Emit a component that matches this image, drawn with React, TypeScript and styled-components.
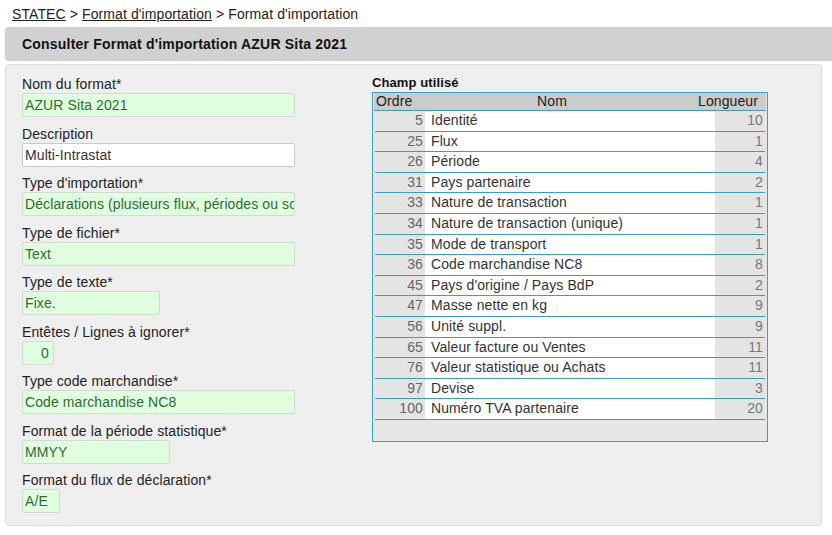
import React from "react";
import styled, { createGlobalStyle } from "styled-components";

const Global = createGlobalStyle`
  html, body { margin: 0; padding: 0; background: #ffffff; }
  body { font-family: "Liberation Sans", Arial, sans-serif; font-size: 14px; color: #222; letter-spacing: 0.1px; }
`;

const Page = styled.div`
  width: 832px;
  height: 535px;
  overflow: hidden;
`;

const Breadcrumb = styled.div`
  padding: 5px 0 0 12px;
  height: 22px;
  line-height: 18px;
  font-size: 14px;
  color: #222;
  box-sizing: border-box;
`;

const Crumb = styled.a`
  color: #222;
  text-decoration: underline;
  cursor: pointer;
`;

const TitleBar = styled.div`
  margin: 5px 0 0 5px;
  height: 34px;
  background: #d1d1d1;
  border-radius: 4px 0 0 4px;
  display: flex;
  align-items: center;
  padding-left: 17px;
  font-weight: bold;
  font-size: 14px;
  letter-spacing: 0.2px;
  color: #111;
`;

const Panel = styled.div`
  margin: 3px 10px 0 5px;
  height: 462px;
  box-sizing: border-box;
  background: #efefef;
  border: 1px solid #dcdcdc;
  border-radius: 4px;
  padding: 10px 0 0 16px;
  display: grid;
  grid-template-columns: 350px 396px;
  align-items: start;
`;

const FormColumn = styled.div`
  display: flex;
  flex-direction: column;
  gap: 7.5px;
`;

const Field = styled.div`
  display: flex;
  flex-direction: column;
`;

const Label = styled.div`
  line-height: 18px;
  height: 18px;
  font-size: 14px;
  color: #222;
`;

const Input = styled.div<{ $w: number; $plain?: boolean; $right?: boolean }>`
  width: ${(p) => p.$w}px;
  height: 24px;
  box-sizing: border-box;
  border: 1px solid ${(p) => (p.$plain ? "#c9c9d2" : "#cfdccf")};
  border-radius: 2px;
  background: ${(p) => (p.$plain ? "#ffffff" : "#dfffdf")};
  color: ${(p) => (p.$plain ? "#333" : "#356835")};
  font-size: 14px;
  line-height: 22px;
  padding: 0 ${(p) => (p.$right ? "4px" : "0")} 0 2px;
  text-align: ${(p) => (p.$right ? "right" : "left")};
  white-space: nowrap;
  overflow: hidden;
`;

const TableColumn = styled.div`
  padding-top: 0;
`;

const TableTitle = styled.div`
  font-weight: bold;
  font-size: 13px;
  line-height: 16px;
  color: #111;
  margin-bottom: 1px;
`;

const TableBox = styled.div`
  border: 1px solid #3b9dbf;
  background: #e6e6e6;
  height: 350px;
  box-sizing: border-box;
`;

const HeaderRow = styled.div`
  display: grid;
  grid-template-columns: 60px 1fr 90px;
  height: 17px;
  line-height: 17px;
  background: #cbcbcb;
  padding: 0 8px 0 2px;
  color: #222;
  font-size: 14px;
  border-bottom: 1px solid #3b9dbf;
  margin: 0 1px;
`;

const HeadCell = styled.div<{ $align: string }>`
  text-align: ${(p) => p.$align};
`;

const Rows = styled.div`
  padding: 0 2px;
`;

const Row = styled.div`
  display: grid;
  grid-template-columns: 50px 1fr 50px;
  height: 20.6px;
  box-sizing: border-box;
  border-bottom: 1px solid #3b9dbf;
  font-size: 14px;
  line-height: 19.6px;
`;

const OrderCell = styled.div`
  background: #e4e4e4;
  color: #666;
  text-align: right;
  padding-right: 2px;
`;

const NameCell = styled.div`
  background: #ffffff;
  color: #333;
  padding-left: 6px;
`;

const LengthCell = styled.div`
  background: #e4e4e4;
  color: #777;
  text-align: right;
  padding-right: 2px;
`;

const fields: { label: string; value: string; w: number; plain?: boolean; right?: boolean }[] = [
  { label: "Nom du format*", value: "AZUR Sita 2021", w: 273 },
  { label: "Description", value: "Multi-Intrastat", w: 273, plain: true },
  { label: "Type d'importation*", value: "Déclarations (plusieurs flux, périodes ou sociétés)", w: 273 },
  { label: "Type de fichier*", value: "Text", w: 273 },
  { label: "Type de texte*", value: "Fixe.", w: 138 },
  { label: "Entêtes / Lignes à ignorer*", value: "0", w: 32, right: true },
  { label: "Type code marchandise*", value: "Code marchandise NC8", w: 273 },
  { label: "Format de la période statistique*", value: "MMYY", w: 148 },
  { label: "Format du flux de déclaration*", value: "A/E", w: 38 },
];

const rows: [number, string, number][] = [
  [5, "Identité", 10],
  [25, "Flux", 1],
  [26, "Période", 4],
  [31, "Pays partenaire", 2],
  [33, "Nature de transaction", 1],
  [34, "Nature de transaction (unique)", 1],
  [35, "Mode de transport", 1],
  [36, "Code marchandise NC8", 8],
  [45, "Pays d'origine / Pays BdP", 2],
  [47, "Masse nette en kg", 9],
  [56, "Unité suppl.", 9],
  [65, "Valeur facture ou Ventes", 11],
  [76, "Valeur statistique ou Achats", 11],
  [97, "Devise", 3],
  [100, "Numéro TVA partenaire", 20],
];

export default function App() {
  return (
    <Page>
      <Global />
      <Breadcrumb>
        <Crumb>STATEC</Crumb> &gt; <Crumb>Format d'importation</Crumb> &gt; Format d'importation
      </Breadcrumb>
      <TitleBar>Consulter Format d'importation AZUR Sita 2021</TitleBar>
      <Panel>
        <FormColumn>
          {fields.map((f) => (
            <Field key={f.label}>
              <Label>{f.label}</Label>
              <Input $w={f.w} $plain={f.plain} $right={f.right}>
                {f.value}
              </Input>
            </Field>
          ))}
        </FormColumn>
        <TableColumn>
          <TableTitle>Champ utilisé</TableTitle>
          <TableBox>
            <HeaderRow>
              <HeadCell $align="left">Ordre</HeadCell>
              <HeadCell $align="center">Nom</HeadCell>
              <HeadCell $align="right">Longueur</HeadCell>
            </HeaderRow>
            <Rows>
              {rows.map(([o, n, l]) => (
                <Row key={o}>
                  <OrderCell>{o}</OrderCell>
                  <NameCell>{n}</NameCell>
                  <LengthCell>{l}</LengthCell>
                </Row>
              ))}
            </Rows>
          </TableBox>
        </TableColumn>
      </Panel>
    </Page>
  );
}
